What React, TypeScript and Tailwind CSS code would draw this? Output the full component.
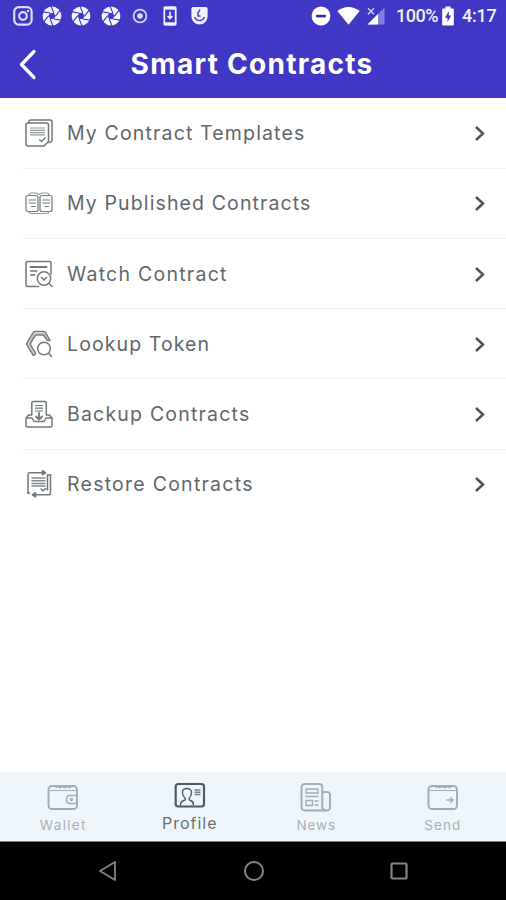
import React from "react";

type P = { className?: string };

const Aperture = ({ className = "" }: P) => (
  <svg className={`h-5 w-5 shrink-0 ${className}`} viewBox="0 0 20 20">
    <circle cx="10" cy="10" r="9.4" fill="#f4f3ff" />
    <g stroke="#4038c4" strokeWidth="1.1">
      {[0, 60, 120, 180, 240, 300].map((a) => (
        <path key={a} d="M11.800 7 9 0" transform={`rotate(${a} 10 10)`} />
      ))}
    </g>
    <path d="M8.200 6.900h3.600l1.800 3.100-1.800 3.100H8.200L6.400 10z" fill="#4038c4" />
  </svg>
);

const StatusBar = () => (
  <div className="flex h-[31px] items-center pl-[13px] pr-[9px] font-['Roboto',sans-serif] text-[#f1f0ff]">
    <svg className="h-5 w-5 shrink-0" viewBox="0 0 20 20" fill="none" stroke="#dddafb" strokeWidth="2.200">
      <rect x="1.200" y="1.200" width="17.400" height="17.400" rx="4.500" />
      <circle cx="10" cy="10" r="3.800" />
      <circle cx="15" cy="5" r=".6" strokeWidth="1.200" />
    </svg>
    <Aperture className="ml-[9px]" />
    <Aperture className="ml-[9px]" />
    <Aperture className="ml-[10px]" />
    <svg className="ml-[11px] h-4 w-4 shrink-0" viewBox="0 0 16 16">
      <circle cx="8" cy="8" r="6.400" fill="none" stroke="#d3d0fa" strokeWidth="1.800" />
      <circle cx="8" cy="8" r="2.800" fill="#dddafd" />
    </svg>
    <svg className="ml-[15px] h-5 w-[14px] shrink-0" viewBox="0 0 14 20">
      <rect x=".4" y=".3" width="13.200" height="19.400" rx="1.800" fill="#f1f0ff" />
      <path d="M2.200 3.700h9.600v12.600H2.200z" fill="#4038c4" />
      <path d="M7 5.500v6.500M4.600 10 7 12.500 9.400 10" fill="none" stroke="#f1f0ff" strokeWidth="1.600" />
    </svg>
    <svg className="ml-[14px] h-5 w-[17px] shrink-0" viewBox="0 0 17 20">
      <path d="M2 1h13q1.600 0 1.600 1.600V10c0 5-4 8.500-8.100 8.500S.4 15 .4 10V2.600Q.4 1 2 1z" fill="#f1f0ff" />
      <path d="M9 3.500 7 7v3h2.500M3.600 11c2 4.700 8 4.700 10 0" fill="none" stroke="#4a42c8" strokeWidth="1.500" />
    </svg>
    <svg className="ml-[103px] h-5 w-5 shrink-0" viewBox="0 0 20 20">
      <circle cx="10" cy="10" r="9.400" fill="#fff" />
      <path d="M5.200 8.800h9.600v2.600H5.200z" fill="#322b9c" />
    </svg>
    <svg className="ml-[6px] h-5 w-[23px] shrink-0" viewBox="0 0 23 20">
      <path d="M.3 5Q11.500-3 22.700 5L11.500 18.700z" fill="#fff" />
    </svg>
    <svg className="ml-[7px] h-5 w-[18px] shrink-0" viewBox="0 0 18 20">
      <path d="M17.500 1.500v17H.5z" fill="#8580df" />
      <path d="M11 8v10.500H.5z" fill="#fff" />
      <path d="m1 2.200 6 6m0-6-6 6" stroke="#dddafd" strokeWidth="1.300" />
    </svg>
    <span className="ml-[11px] w-[42px] whitespace-nowrap text-[18px] font-medium leading-5 tracking-[-0.5px]">100%</span>
    <svg className="ml-[4px] h-5 w-3 shrink-0" viewBox="0 0 12 20">
      <path d="M3.500.5h5v2H11a1 1 0 0 1 .8 1v15a1 1 0 0 1-1 1H1.200a1 1 0 0 1-1-1v-15a1 1 0 0 1 1-1h2.300z" fill="#fff" />
      <path d="M6.800 5 3 11.700h2.500V16L9.200 9.500H6.800z" fill="#4038c4" />
    </svg>
    <span className="ml-[8px] whitespace-nowrap text-[18px] font-medium leading-5 tracking-[-0.2px]">4:17</span>
  </div>
);

const box = "h-7 w-7 shrink-0";
const line = { fill: "none", stroke: "#70787b", strokeWidth: 1.5, strokeLinejoin: "round", strokeLinecap: "round" } as const;

const TemplatesIcon = () => (
  <svg className={box} viewBox="0 0 28 28" {...line}>
    <path d="M4 4V2.600Q4 1 6 1h19q2 0 2 2v19l-2 1.500h-1.300M3 4H21.500q2 0 2 2v16.500L19 27H3q-2 0-2-2V6Q1 4 3 4z" />
    <path d="M5.500 9h14M5.500 11.300h14M5.500 13.600h14M5.500 15.900h14" strokeWidth="1.200" stroke="#92999c" />
    <path d="m14.500 21 2 1.500 3.500-3.500" />
  </svg>
);
const PublishedIcon = () => (
  <svg className={box} viewBox="0 0 28 28" {...line} strokeWidth="1.200">
    <rect x="1" y="6.500" width="12" height="16" rx="2" />
    <rect x="15" y="6.500" width="12" height="16" rx="2" />
    <path d="M3.500 6.500Q4 4 6.500 4H11l3 1.500L17 4h4.500q2.500 0 3 2.500M3.500 22.500q.5 2 3 2h15q2.500 0 3-2" stroke="#92999c" />
    <path d="M4 11h6.500M4 14h6.500M6.500 17.500H10M18 11h6.500M18 14h6.500M20 17.500h3.500" />
  </svg>
);
const WatchIcon = () => (
  <svg className={box} viewBox="0 0 28 28" {...line}>
    <path d="M13.500 26.500H2.500Q1 26.500 1 25V3q0-1.500 1.500-1.500h22Q26 1.500 26 3v11" />
    <path d="M5.500 7h16" strokeWidth="1.900" />
    <path d="M5.500 11H12M5.500 15H10" strokeWidth="1.300" />
    <circle cx="19" cy="18.500" r="6.700" />
    <path d="m16.500 17.500 2.500 2.600 2.500-2.600M24 23.500l3 3" />
  </svg>
);
const LookupIcon = () => (
  <svg className={box} viewBox="0 0 28 28" {...line}>
    <path d="M8.500 25.500 1.500 14 8 2.800Q8.700 1.500 10 1.500h8.500q1.500 0 2.200 1.300L25 10.500h-2.500L18.500 5h-8L5 14l5.500 9.500z" />
    <path d="M4 14 9.300 3.800h10L23 10M4 14l5 8.500" strokeWidth="1" stroke="#a0a6a9" />
    <circle cx="19" cy="18.500" r="6.300" />
    <path d="m23.700 23.200 2.800 3.300" />
  </svg>
);
const BackupIcon = () => (
  <svg className={box} viewBox="0 0 28 28" {...line}>
    <path d="M6.800 15V3q0-1.500 1.500-1.500h11.500q1.500 0 1.500 1.500v12M6.800 15H3.500L1 18v7.500Q1 27 2.500 27h23q1.500 0 1.500-1.500V18l-2.500-3h-3.200M1 18h6l2 3.500h10l2-3.500h6" />
    <path d="M10.500 5.500h7M10.500 8.200h7M10.500 11h7" strokeWidth="1.200" />
    <path d="M14 13v6.500m-3-3 3 3 3-3" strokeWidth="1.800" />
  </svg>
);
const RestoreIcon = () => (
  <svg className={box} viewBox="0 0 28 28" {...line}>
    <path d="M3 23V4.500Q3 2.700 5 2.700h14M25.500 5v18q0 1.800-2 1.800H9M22.500 5V20" />
    <path d="m17.500.8 3 1.900-3 1.900zM10.500 22.900l-3 1.900 3 1.900zM3 23h1.500M22.500 5h3" fill="#596164" strokeWidth="1.600" />
    <path d="M7 8h13M7 10.700h13M7 13.400h13M7 16h13" stroke="#858c8f" strokeWidth="1.500" />
    <path d="m16 19 2 2 3-2.500" />
  </svg>
);

const rows = [
  { label: "My Contract Templates", icon: <TemplatesIcon />, track: "tracking-[1.15px]" },
  { label: "My Published Contracts", icon: <PublishedIcon />, track: "tracking-[1.12px]" },
  { label: "Watch Contract", icon: <WatchIcon />, track: "tracking-[1.25px]" },
  { label: "Lookup Token", icon: <LookupIcon />, track: "tracking-[1.1px]" },
  { label: "Backup Contracts", icon: <BackupIcon />, track: "tracking-[1.2px]" },
  { label: "Restore Contracts", icon: <RestoreIcon />, track: "tracking-[1.25px]" },
];

const muted = { ...line, stroke: "#a2acb2", strokeWidth: 1.9 } as const;
const tabIcon = "h-[30px] w-[32px]";

const WalletTab = () => (
  <svg className={tabIcon} viewBox="0 0 32 30" {...muted}>
    <rect x="1.500" y="4" width="28.500" height="23" rx="3.500" />
    <path d="M2 8.500h27.500M9 6l1-1.500 3 1.500 2-1.500L18 6l2-1.500L23 6l1-1.500" strokeWidth="1.200" />
    <path d="M30 13.500h-7q-3.500 0-3.500 4t3.500 4h7" strokeWidth="1.500" />
    <circle cx="24.500" cy="17.500" r="1" strokeWidth="1.400" />
  </svg>
);
const ProfileTab = () => (
  <svg className={tabIcon} viewBox="0 0 32 30" {...line} stroke="#505a5d">
    <rect x="1.700" y="2" width="28.300" height="22.500" rx="2.500" strokeWidth="2.200" />
    <path d="M6.500 23q0-3.500 3.500-4.500 1.800-.5 1.200-2.200Q9 14.500 8.500 11.500 8 6.500 12.500 6.500q5.500 0 5 5-.5 3-2.300 4.800-.5 1.700 1.300 2.200 3 1 3 4.500" strokeWidth="1.400" />
    <path d="M21 8h5M21 10.300h5M21 12.600h5" strokeWidth="1.500" stroke="#788286" />
  </svg>
);
const NewsTab = () => (
  <svg className={tabIcon} viewBox="0 0 32 30" {...muted}>
    <path d="M5 2h14q3.300 0 3.300 3v20q0 3.500 3.500 3.500H5Q1.500 28.500 1.500 25V5.500Q1.500 2 5 2zM22.300 10H27q3 0 3 3v12q0 3.500-3.500 3.500T22.300 25" />
    <path d="M6 7h12v4H6zM6 14.500h12M6 18.500h6.500v5H6zM15 19h3M15 23h3" strokeWidth="1.400" />
  </svg>
);
const SendTab = () => (
  <svg className={tabIcon} viewBox="0 0 32 30" {...muted}>
    <rect x="1.500" y="4" width="28.500" height="23" rx="3.500" />
    <path d="M2 8.500h27.500M9 6l1-1.500 3 1.500 2-1.500L18 6l2-1.500L23 6l1-1.500" strokeWidth="1.200" />
    <path d="M20 18h6m-2.500-2.500L26 18l-2.500 2.500" strokeWidth="1.400" />
  </svg>
);

export default function App() {
  return (
    <div className="flex h-[900px] w-[506px] flex-col overflow-hidden bg-white font-['Inter',sans-serif]">
      <header className="h-[98px] shrink-0 bg-[#4038c4]">
        <StatusBar />
        <div className="grid h-[66px] grid-cols-[60px_1fr_60px] items-center text-white">
          <svg className="ml-[18px] h-8 w-5" viewBox="0 0 20 32" fill="none" stroke="white" strokeWidth="3.300" strokeLinecap="round" strokeLinejoin="round">
            <path d="M16 3.500 3.500 16.500 16 29.500" />
          </svg>
          <h1 className="-ml-[2px] whitespace-nowrap text-center text-[28px] font-bold leading-8 tracking-[1.25px]">Smart Contracts</h1>
        </div>
      </header>

      <main className="flex-1 pt-[0.3px]">
        {rows.map((r, i) => (
          <div key={r.label} className="ml-[22px] h-[70.3px]">
            <div className={`flex h-full items-center border-b pl-[2.500px] pr-[20px] ${i < 5 ? "border-[#eff1f2]" : "border-transparent"}`}>
              {r.icon}
              <span className={`ml-[14.5px] flex-1 whitespace-nowrap text-[19.5px] leading-6 text-[#5f676a] ${r.track}`}>{r.label}</span>
              <svg className="h-4 w-3 shrink-0" viewBox="0 0 12 16" fill="none" stroke="#4b5052" strokeWidth="2.400">
                <path d="m2 2 7 6.500L2 15" />
              </svg>
            </div>
          </div>
        ))}
      </main>

      <nav className="grid h-[70px] shrink-0 grid-cols-4 border-b border-[#7b8285] bg-[#eef6fc] text-[13.500px] leading-4 text-[#a8b0b6]">
        <div className="flex flex-col items-center pt-[10px]">
          <WalletTab />
          <span className="mt-[5px] tracking-[1.3px]">Wallet</span>
        </div>
        <div className="flex flex-col items-center pt-[10px] text-[#687174]">
          <ProfileTab />
          <span className="mt-[3px] text-[16px] tracking-[1px]">Profile</span>
        </div>
        <div className="flex flex-col items-center pt-[10px]">
          <NewsTab />
          <span className="mt-[5px] tracking-[0.9px]">News</span>
        </div>
        <div className="flex flex-col items-center pt-[10px]">
          <SendTab />
          <span className="mt-[5px] tracking-[1.1px]">Send</span>
        </div>
      </nav>

      <footer className="flex h-[58px] shrink-0 items-center justify-between bg-black pl-[98px] pr-[97px]">
        <svg className="h-[22px] w-5" viewBox="0 0 20 22" fill="none" stroke="#858585" strokeWidth="1.800" strokeLinejoin="round">
          <path d="M17 2v18L2 11z" />
        </svg>
        <svg className="h-[22px] w-[22px]" viewBox="0 0 22 22" fill="none" stroke="#858585" strokeWidth="2">
          <circle cx="11" cy="11" r="9" />
        </svg>
        <svg className="h-5 w-5" viewBox="0 0 20 20" fill="none" stroke="#858585" strokeWidth="2.200">
          <rect x="2.500" y="2.500" width="15" height="15" rx="1" />
        </svg>
      </footer>
    </div>
  );
}
